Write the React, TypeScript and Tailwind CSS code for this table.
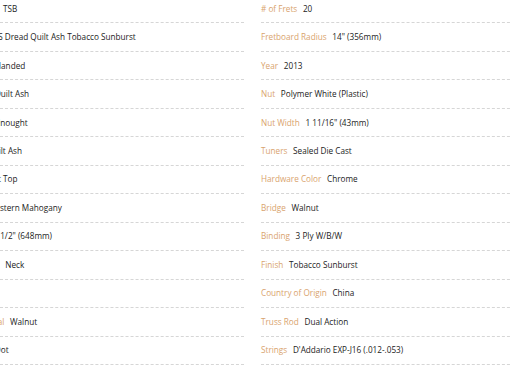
import React from 'react';

interface Spec {
  label: string;
  value: string;
  shift?: string;
}

// left column is partly scrolled out of view; shift places the value start
const leftSpecs: Spec[] = [
  { label: 'Model', value: 'TSB', shift: 'ml-[3px]' },
  { label: 'Model Name', value: 'GS Dread Quilt Ash Tobacco Sunburst', shift: '-ml-[7.8px]' },
  { label: 'Orientation', value: 'Right Handed', shift: '-ml-[26.6px]' },
  { label: 'Top', value: 'Quilt Ash', shift: '-ml-[5.6px]' },
  { label: 'Body Shape', value: 'Dreadnought', shift: '-ml-[23.2px]' },
  { label: 'Back & Sides', value: 'Quilt Ash', shift: '-ml-[12.7px]' },
  { label: 'Top Type', value: 'Flat Top', shift: '-ml-[12.9px]' },
  { label: 'Neck', value: 'Eastern Mahogany', shift: '-ml-[9.2px]' },
  { label: 'Scale Length', value: '25 1/2" (648mm)', shift: '-ml-[11.3px]' },
  { label: 'Neck Joint', value: 'Neck', shift: 'ml-[5.3px]' },
  { label: 'Cutaway', value: 'No', shift: '-ml-[14px]' },
  { label: 'Fingerboard Material', value: 'Walnut', shift: 'ml-[10px]' },
  { label: 'Inlays', value: 'Dot', shift: '-ml-[5.2px]' },
];

const rightSpecs: Spec[] = [
  { label: '# of Frets', value: '20' },
  { label: 'Fretboard Radius', value: '14" (356mm)' },
  { label: 'Year', value: '2013' },
  { label: 'Nut', value: 'Polymer White (Plastic)' },
  { label: 'Nut Width', value: '1 11/16" (43mm)' },
  { label: 'Tuners', value: 'Sealed Die Cast' },
  { label: 'Hardware Color', value: 'Chrome' },
  { label: 'Bridge', value: 'Walnut' },
  { label: 'Binding', value: '3 Ply W/B/W' },
  { label: 'Finish', value: 'Tobacco Sunburst' },
  { label: 'Country of Origin', value: 'China' },
  { label: 'Truss Rod', value: 'Dual Action' },
  { label: 'Strings', value: "D'Addario EXP-J16 (.012-.053)" },
];

const rowClass =
  'flex h-[28.47px] items-center whitespace-nowrap border-b border-dashed border-[#d6d6d6]';

function LeftRow({ spec }: { spec: Spec }) {
  return (
    <div className={rowClass}>
      <div className={`flex w-0 shrink-0 justify-end ${spec.shift}`}>
        <span className="pr-[5.7px] text-[#d9a36e]">{spec.label}</span>
      </div>
      <span className="text-[#222222]">{spec.value}</span>
    </div>
  );
}

function RightRow({ spec }: { spec: Spec }) {
  return (
    <div className={`${rowClass} gap-[5.7px]`}>
      <span className="text-[#d9a36e]">{spec.label}</span>
      <span className="text-[#222222]">{spec.value}</span>
    </div>
  );
}

export default function App() {
  return (
    <div
      className="h-[382px] w-[510px] overflow-hidden bg-white text-[8.2px] leading-none"
      style={{ fontFamily: '"Open Sans", "Noto Sans", sans-serif' }}
    >
      <div className="-mt-[5px] grid grid-cols-[244px_1fr] gap-x-[17px]">
        <div className="flex flex-col">
          {leftSpecs.map((s) => (
            <LeftRow key={s.label} spec={s} />
          ))}
        </div>
        <div className="-mr-[20px] flex flex-col">
          {rightSpecs.map((s) => (
            <RightRow key={s.label} spec={s} />
          ))}
        </div>
      </div>
    </div>
  );
}
